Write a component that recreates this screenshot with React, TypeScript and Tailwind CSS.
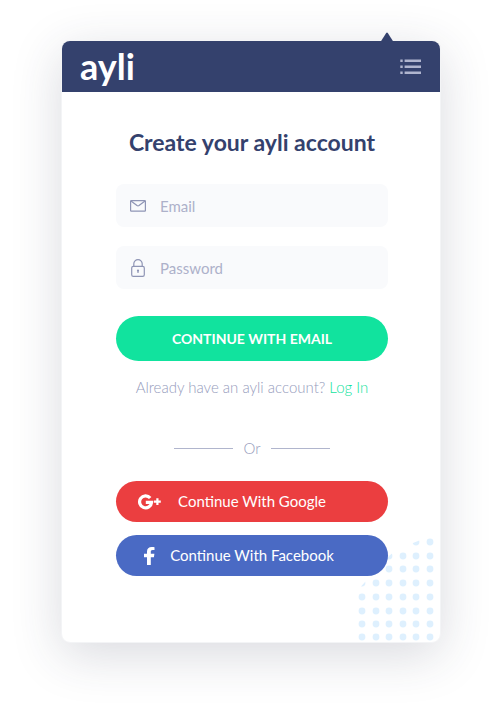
import React from "react";

const dotXs = [6, 20, 33, 47, 60, 74];
const dotYs = [6, 20, 33, 47, 61, 75, 88, 101];

function DotPattern() {
  return (
    <svg
      className="pointer-events-none absolute right-1 bottom-0"
      width="80"
      height="106"
      viewBox="0 0 80 106"
      aria-hidden="true"
    >
      <clipPath id="dot-sweep">
        <path d="M0 56 L9 46 L33 20 Q44 9 57 7 L67 3 V0 H80 V106 H0 Z" />
      </clipPath>
      <g fill="#def0fe" clipPath="url(#dot-sweep)">
        {dotYs.map((y) =>
          dotXs
            .filter((x) => y > 6 || x > 50)
            .map((x) => <circle key={`${x}-${y}`} cx={x} cy={y} r="3.4" />)
        )}
      </g>
    </svg>
  );
}

function MailIcon() {
  return (
    <svg width="16" height="12" viewBox="0 0 16 12" fill="none" stroke="#8f95b5" strokeWidth="1.2" aria-hidden="true">
      <rect x="0.6" y="0.6" width="14.8" height="10.6" rx="0.6" />
      <path d="M1 1 L7 5.6 Q8 6.3 9 5.6 L15 1" />
    </svg>
  );
}

function LockIcon() {
  return (
    <svg width="14" height="18" viewBox="0 0 14 18" fill="none" stroke="#8f95b5" strokeWidth="1.2" aria-hidden="true">
      <rect x="0.7" y="7.4" width="12.6" height="9.9" rx="1.6" />
      <path d="M2.8 7.4 V4.8 A4.2 4.2 0 0 1 11.2 4.8 V7.4" />
      <circle cx="7" cy="11.6" r="1.1" fill="#8f95b5" stroke="none" />
      <path d="M7 11.6 V14" />
    </svg>
  );
}

function GooglePlusIcon() {
  return (
    <svg width="23" height="16" viewBox="0 0 23 16" fill="none" stroke="#fff" aria-hidden="true">
      <path d="M12.2 4 A6 6 0 1 0 13.6 8.4 H7.8" strokeWidth="3.2" />
      <path d="M16 7.7 H22.8 M19.4 4.3 V11.1" strokeWidth="2.2" />
    </svg>
  );
}

function FacebookIcon() {
  return (
    <svg width="11" height="18" viewBox="0 0 11 18" fill="#fff" aria-hidden="true">
      <path d="M3 18 V10.2 H0 V6.8 H3 V4.4 C3 1.6 4.8 0 7.7 0 C9 0 10 0.1 10.5 0.2 V3.1 H8.7 C7.2 3.1 6.8 3.8 6.8 4.9 V6.8 H10.4 L9.9 10.2 H6.8 V18 Z" />
    </svg>
  );
}

type FieldProps = {
  id: string;
  type: string;
  label: string;
  icon: React.ReactNode;
};

function Field({ id, type, label, icon }: FieldProps) {
  return (
    <div className="flex h-[43px] items-center rounded-lg bg-[#f9fafc] px-3">
      <label htmlFor={id} className="flex w-5 shrink-0 justify-center" aria-label={label}>
        {icon}
      </label>
      <input
        id={id}
        type={type}
        placeholder={label}
        className="ml-3 h-full min-w-0 flex-1 bg-transparent text-[15px] text-[#34416d] outline-none placeholder:text-[#adb1ca]"
      />
    </div>
  );
}

type SocialButtonProps = {
  icon: React.ReactNode;
  color: string;
  children: React.ReactNode;
};

function SocialButton({ icon, color, children }: SocialButtonProps) {
  return (
    <button
      type="button"
      className={`grid h-[41px] w-full grid-cols-[23px_1fr_23px] items-center rounded-full px-[22px] text-[15px] text-white ${color}`}
    >
      <span className="flex justify-center">{icon}</span>
      <span>{children}</span>
    </button>
  );
}

export default function App() {
  return (
    <main className="bg-white pt-10 pr-[59px] pb-20 pl-[61px] font-['Lato','Open_Sans',sans-serif]">
      <div className="relative rounded-[9px] border border-[#f3f4f6] bg-white shadow-[0_12px_50px_rgba(45,50,75,0.18)]">
        <svg className="absolute -top-[9px] right-[46px]" width="14" height="10" viewBox="0 0 14 10" aria-hidden="true">
          <path d="M0.5 10 L6.2 0.9 Q7 0 7.8 0.9 L13.5 10 Z" fill="#34416d" />
        </svg>
        <header className="flex h-[51px] items-center justify-between rounded-t-lg bg-[#34416d] pr-[19px] pl-[18px]">
          <a href="#" className="text-4xl leading-[51px] font-bold text-white">
            ayli
          </a>
          <button type="button" aria-label="Menu">
            <svg width="21" height="15" viewBox="0 0 21 15" fill="#b0b5cf" aria-hidden="true">
              <path d="M0.3 0.6h2.4v2.4H0.3zM0.3 6.6h2.4v2.4H0.3zM0.3 12.6h2.4v2.4H0.3z" />
              <path d="M4.6 0.6h16.4v2.4H4.6zM4.6 6.6h16.4v2.4H4.6zM4.6 12.6h16.4v2.4H4.6z" />
            </svg>
          </button>
        </header>
        <DotPattern />
        <form className="relative flex flex-col pt-9 pr-[52px] pb-[66px] pl-[54px]" onSubmit={(e) => e.preventDefault()}>
          <h1 className="text-center text-[23px] leading-7 font-bold whitespace-nowrap text-[#34416d]">
            Create your ayli account
          </h1>
          <div className="mt-7 flex flex-col gap-[19px]">
            <Field id="email" type="email" label="Email" icon={<MailIcon />} />
            <Field id="password" type="password" label="Password" icon={<LockIcon />} />
          </div>
          <button
            type="submit"
            className="mt-[27px] h-[45px] rounded-full bg-[#11e39e] text-sm font-bold text-white"
          >
            CONTINUE WITH EMAIL
          </button>
          <p className="mt-4 text-center text-[15px] leading-5 font-light whitespace-nowrap text-[#969cbc]">
            Already have an ayli account?{" "}
            <a href="#" className="text-[#11e39e]">
              Log In
            </a>
          </p>
          <div className="mt-[41px] flex items-center justify-center gap-[10px] text-[15px] leading-5 font-light text-[#969cbc]">
            <span className="h-px w-[59px] bg-[#b0b5cd]" />
            <span>Or</span>
            <span className="h-px w-[59px] bg-[#b0b5cd]" />
          </div>
          <div className="mt-[23px] flex flex-col gap-[13px]">
            <SocialButton color="bg-[#eb3e40]" icon={<GooglePlusIcon />}>
              Continue With Google
            </SocialButton>
            <SocialButton color="bg-[#4a6ac4]" icon={<FacebookIcon />}>
              Continue With Facebook
            </SocialButton>
          </div>
        </form>
      </div>
    </main>
  );
}
